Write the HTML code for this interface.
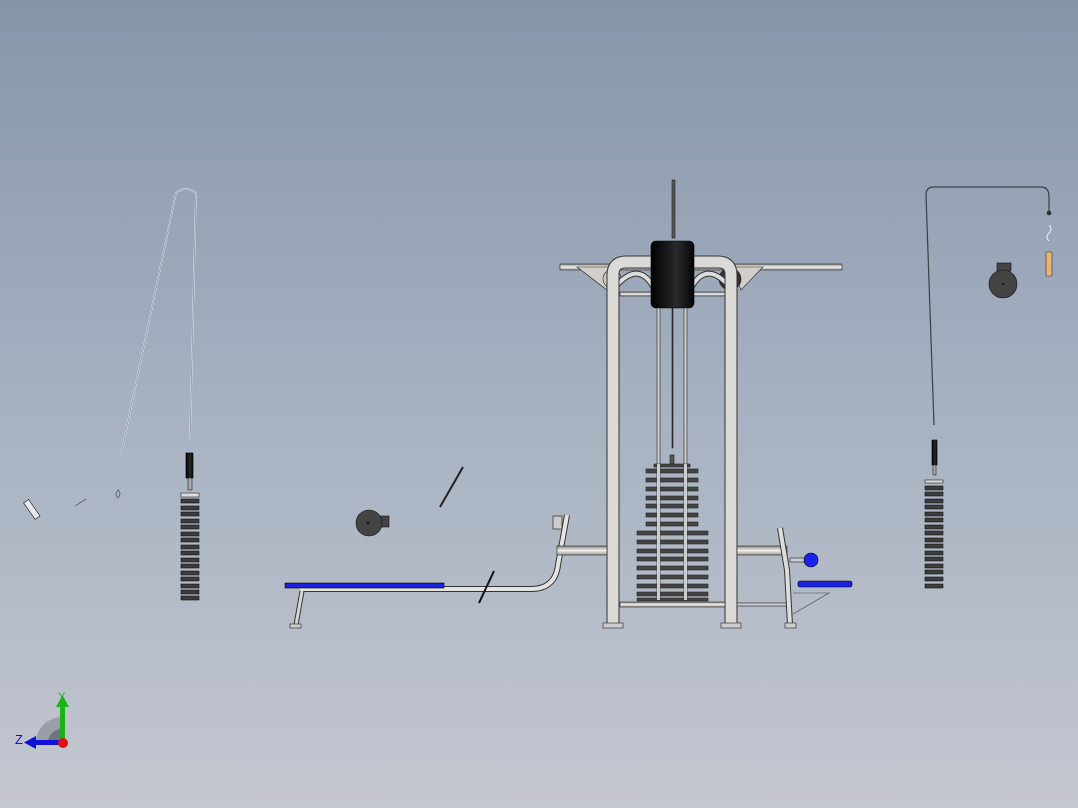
<!DOCTYPE html>
<html><head><meta charset="utf-8"><style>
html,body{margin:0;padding:0}
body{width:1078px;height:808px;overflow:hidden;background:linear-gradient(#8696aa,#a6b1c1 50%,#c4c7d0)}
svg{position:absolute;left:0;top:0}
</style></head><body>
<svg width="1078" height="808" viewBox="0 0 1078 808">
<defs>
<linearGradient id="tv" x1="0" x2="1"><stop offset="0" stop-color="#8a8784"/><stop offset=".5" stop-color="#f2f1ee"/><stop offset="1" stop-color="#9a9692"/></linearGradient>
<linearGradient id="th" x1="0" y1="0" x2="0" y2="1"><stop offset="0" stop-color="#8a8784"/><stop offset=".5" stop-color="#f2f1ee"/><stop offset="1" stop-color="#9a9692"/></linearGradient>
<linearGradient id="blk" x1="0" x2="1"><stop offset="0" stop-color="#000"/><stop offset=".6" stop-color="#2a2a2a"/><stop offset="1" stop-color="#050505"/></linearGradient>
<g id="plate"><rect width="18" height="4" fill="#3c3c3c" stroke="#111" stroke-width=".6"/></g>
</defs>
<g stroke="#222" stroke-width=".6">
<!-- LEFT CABLE -->
<path d="M121 455 L176 193 Q186 185 196 193 L190 440" fill="none" stroke="#e4e8f4" stroke-width="1.6"/>
<path d="M121 455 L176 193 Q186 185 196 193 L190 440" fill="none" stroke="#5a6474" stroke-width=".5"/>
<rect x="186" y="453" width="7" height="25" fill="url(#blk)" stroke="#000"/>
<rect x="188" y="478" width="4" height="12" fill="#aaa"/>
<rect x="181" y="493" width="18" height="4" fill="#ddd"/>
<use href="#plate" x="181" y="499"/><use href="#plate" x="181" y="506"/><use href="#plate" x="181" y="512"/><use href="#plate" x="181" y="519"/><use href="#plate" x="181" y="525"/><use href="#plate" x="181" y="532"/><use href="#plate" x="181" y="538"/><use href="#plate" x="181" y="545"/><use href="#plate" x="181" y="551"/><use href="#plate" x="181" y="558"/><use href="#plate" x="181" y="564"/><use href="#plate" x="181" y="571"/><use href="#plate" x="181" y="577"/><use href="#plate" x="181" y="584"/><use href="#plate" x="181" y="590"/><use href="#plate" x="181" y="596"/>
<rect x="29" y="500" width="6" height="20" fill="#e8e8ee" stroke="#111" transform="rotate(-35 31 510)"/>
<path d="M75 506 L86 499" stroke="#333" fill="none"/>
<path d="M118 490 q4 3 0 8 q-4-3 0-8" fill="none" stroke="#333"/>
<!-- RIGHT CABLE -->
<path d="M934 425 L926 195 Q926 187 934 187 L1041 187 Q1049 187 1049 197 L1049 212" fill="none" stroke="#3c3f45" stroke-width="1.2"/>
<circle cx="1049" cy="213" r="2" fill="#333"/>
<path d="M1049 225 q4 4 0 8 q-4 4 0 8" fill="none" stroke="#eef" stroke-width="1"/>
<rect x="1046" y="252" width="6" height="24" rx="1" fill="#e9b373" stroke="#333"/>
<rect x="997" y="263" width="14" height="8" fill="#444" stroke="#111"/>
<circle cx="1003" cy="284" r="14" fill="#444" stroke="#111"/>
<circle cx="1003" cy="284" r="1" fill="#000"/>
<rect x="932" y="440" width="5" height="25" fill="url(#blk)" stroke="#000"/>
<rect x="933" y="465" width="3" height="10" fill="#aaa"/>
<rect x="925" y="480" width="18" height="3" fill="#ddd"/>
<use href="#plate" x="925" y="486"/><use href="#plate" x="925" y="492"/><use href="#plate" x="925" y="499"/><use href="#plate" x="925" y="505"/><use href="#plate" x="925" y="512"/><use href="#plate" x="925" y="518"/><use href="#plate" x="925" y="525"/><use href="#plate" x="925" y="531"/><use href="#plate" x="925" y="538"/><use href="#plate" x="925" y="544"/><use href="#plate" x="925" y="551"/><use href="#plate" x="925" y="557"/><use href="#plate" x="925" y="564"/><use href="#plate" x="925" y="570"/><use href="#plate" x="925" y="577"/><use href="#plate" x="925" y="584"/>
<!-- BENCH -->
<rect x="369" y="516" width="20" height="11" fill="#444" stroke="#111"/>
<circle cx="369" cy="523" r="13" fill="#444" stroke="#111"/>
<circle cx="368" cy="523" r="1" fill="#000"/>
<path d="M440 507 L463 467" stroke="#222" stroke-width="2"/>
<path d="M300 589 L531 589 Q555 589 558 565 L567 515" fill="none" stroke="#333" stroke-width="6"/>
<path d="M300 589 L531 589 Q555 589 558 565 L567 515" fill="none" stroke="#e6e4e0" stroke-width="4"/>
<path d="M302 591 L296 625" stroke="#333" stroke-width="5"/><path d="M302 591 L296 625" stroke="#d8d6d2" stroke-width="3"/>
<rect x="290" y="624" width="11" height="4" fill="#ccc"/>
<rect x="285" y="583" width="159" height="5" fill="#1a22e0" stroke="#000"/>
<path d="M479 603 L494 571" stroke="#111" stroke-width="2"/>
<rect x="553" y="516" width="9" height="13" fill="#ccc" stroke="#111"/>
<!-- CENTER MACHINE -->
<rect x="672" y="180" width="3" height="58" fill="#555"/>
<rect x="560" y="264" width="282" height="6" fill="url(#th)"/>
<polygon points="577,267 618,267 607,290" fill="#d2cfcb"/>
<polygon points="732,267 763,267 741,290" fill="#d2cfcb"/>
<circle cx="612" cy="279" r="9" fill="#cfccc8"/>
<circle cx="730" cy="279" r="11" fill="#333"/>
<path d="M617 285 Q640 260 655 290" fill="none" stroke="#333" stroke-width="6"/><path d="M617 285 Q640 260 655 290" fill="none" stroke="#ddd" stroke-width="4"/>
<path d="M728 285 Q705 260 690 290" fill="none" stroke="#333" stroke-width="6"/><path d="M728 285 Q705 260 690 290" fill="none" stroke="#ddd" stroke-width="4"/>
<rect x="620" y="292" width="105" height="4" fill="url(#th)"/>
<path d="M613 625 L613 275 Q613 262 626 262 L651 262" fill="none" stroke="#333" stroke-width="13"/>
<path d="M613 625 L613 275 Q613 262 626 262 L651 262" fill="none" stroke="#dcdad6" stroke-width="11"/>
<path d="M731 625 L731 275 Q731 262 718 262 L694 262" fill="none" stroke="#333" stroke-width="13"/>
<path d="M731 625 L731 275 Q731 262 718 262 L694 262" fill="none" stroke="#dcdad6" stroke-width="11"/>
<rect x="651" y="241" width="43" height="67" rx="5" fill="url(#blk)" stroke="#000"/>
<rect x="657" y="308" width="3" height="292" fill="#ccc"/>
<rect x="684" y="308" width="3" height="292" fill="#ccc"/>
<rect x="672" y="308" width="1" height="140" fill="#333"/>
<rect x="670" y="455" width="4" height="9" fill="#555"/>
<rect x="654" y="464" width="36" height="3" fill="#444"/>
<rect x="646" y="469" width="52" height="4" fill="#444"/><rect x="646" y="478" width="52" height="4" fill="#444"/><rect x="646" y="487" width="52" height="4" fill="#444"/><rect x="646" y="496" width="52" height="4" fill="#444"/><rect x="646" y="504" width="52" height="4" fill="#444"/><rect x="646" y="513" width="52" height="4" fill="#444"/><rect x="646" y="522" width="52" height="4" fill="#444"/>
<rect x="637" y="531" width="71" height="4" fill="#444"/><rect x="637" y="540" width="71" height="4" fill="#444"/><rect x="637" y="549" width="71" height="4" fill="#444"/><rect x="637" y="557" width="71" height="4" fill="#444"/><rect x="637" y="566" width="71" height="4" fill="#444"/><rect x="637" y="575" width="71" height="4" fill="#444"/><rect x="637" y="584" width="71" height="4" fill="#444"/><rect x="637" y="592" width="71" height="4" fill="#444"/><rect x="637" y="598" width="71" height="3" fill="#444"/>
<rect x="657" y="464" width="3" height="136" fill="#ccc" stroke="none"/><rect x="684" y="464" width="3" height="136" fill="#ccc" stroke="none"/>
<rect x="620" y="602" width="105" height="5" fill="url(#th)"/>
<rect x="737" y="603" width="53" height="3" fill="#ccc"/>
<rect x="603" y="623" width="20" height="5" fill="#ccc"/><rect x="721" y="623" width="20" height="5" fill="#ccc"/>
<rect x="557" y="546" width="50" height="9" fill="url(#th)"/>
<rect x="737" y="546" width="50" height="9" fill="url(#th)"/>
<path d="M780 528 L787 570 L790 625" fill="none" stroke="#333" stroke-width="6"/><path d="M780 528 L787 570 L790 625" fill="none" stroke="#ddd" stroke-width="4"/>
<rect x="785" y="623" width="11" height="5" fill="#ccc"/>
<rect x="790" y="558" width="15" height="4" fill="#ccc"/>
<circle cx="811" cy="560" r="7" fill="#1a22f0" stroke="#000"/>
<path d="M793 593 L829 593 L793 614" fill="none" stroke="#444"/>
<rect x="798" y="581" width="54" height="6" rx="2" fill="#1a22e0" stroke="#000"/>
</g>
<!-- TRIAD -->
<path d="M36 743 A26 26 0 0 1 62 717 L62 743Z" fill="#9a9ea6"/>
<path d="M48 743 A14 14 0 0 1 62 729 L62 743Z" fill="#6f737a"/>
<rect x="60" y="705" width="5" height="36" fill="#18b418"/>
<polygon points="56,707 62.5,695 69,707" fill="#18b418"/>
<rect x="34" y="740" width="26" height="5" fill="#1010d8"/>
<polygon points="36,736 24,742.5 36,749" fill="#1010d8"/>
<circle cx="63" cy="743" r="5" fill="#e01010"/>
<text x="58" y="700" font-family="Liberation Sans, sans-serif" font-size="11" fill="#18b418">Y</text>
<text x="15" y="744" font-family="Liberation Sans, sans-serif" font-size="13" fill="#1010d8">Z</text>
</svg>
</body></html>
